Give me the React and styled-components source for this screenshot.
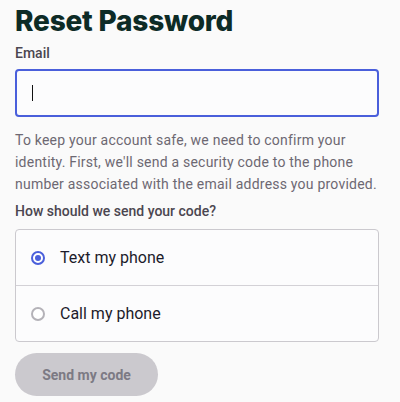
import styled, { createGlobalStyle } from 'styled-components';

const GlobalStyle = createGlobalStyle`
  body {
    margin: 0;
    background: #fafafa;
    font-family: Roboto, "Liberation Sans", sans-serif;
  }
`;

const Page = styled.div`
  padding: 0 21px 0 15px;
  display: flex;
  flex-direction: column;
`;

const Title = styled.h1`
  margin: 0;
  font-family: Inter, "Open Sans", sans-serif;
  font-weight: 800;
  font-size: 28px;
  line-height: 43px;
  color: #0d2b26;
  letter-spacing: -0.2px;
`;

const Label = styled.div`
  margin-top: ${props => props.top || 0}px;
  font-size: 14px;
  font-weight: 500;
  line-height: 20px;
  color: #4b4650;
`;

const Input = styled.div`
  margin-top: 6px;
  height: 44px;
  border: 2px solid #4a5fdb;
  border-radius: 4px;
  background: #fcfcfd;
  display: flex;
  align-items: center;
  padding-left: 15px;
`;

const Caret = styled.span`
  width: 1px;
  height: 16px;
  background: #111;
`;

const Note = styled.p`
  margin: 12px 0 0;
  font-size: 14px;
  line-height: 22px;
  letter-spacing: 0.22px;
  color: #6d6872;
`;

const Options = styled.div`
  margin-top: 8px;
  border: 1px solid #cbc9ce;
  border-radius: 4px;
  background: #fcfcfd;
`;

const Option = styled.label`
  height: 55px;
  display: flex;
  align-items: center;
  gap: 15px;
  padding-left: 15px;
  font-size: 16px;
  color: #1c1b2b;
  border-top: ${props => (props.first ? 'none' : '1px solid #d3d1d6')};
`;

const Radio = styled.span`
  box-sizing: border-box;
  width: 14px;
  height: 14px;
  border-radius: 50%;
  border: 2px solid ${props => (props.checked ? '#4a5fdb' : '#b4b2b8')};
  background: #fff;
  display: flex;
  align-items: center;
  justify-content: center;

  &::after {
    content: '';
    width: 6px;
    height: 6px;
    border-radius: 50%;
    background: ${props => (props.checked ? '#4a5fdb' : 'transparent')};
  }
`;

const Button = styled.button`
  margin-top: 11px;
  align-self: flex-start;
  width: 143px;
  height: 43px;
  border: none;
  border-radius: 22px;
  background: #cbc9ce;
  color: #7c7a84;
  font-family: Roboto, sans-serif;
  font-size: 14px;
  font-weight: 700;
`;

export default function App() {
  return (
    <>
      <GlobalStyle />
      <Page>
        <Title>Reset Password</Title>
        <Label>Email</Label>
        <Input>
          <Caret />
        </Input>
        <Note>
          To keep your account safe, we need to confirm your identity. First,
          we'll send a security code to the phone number associated with the
          email address you provided.
        </Note>
        <Label top={6}>How should we send your code?</Label>
        <Options>
          <Option first>
            <Radio checked />
            Text my phone
          </Option>
          <Option>
            <Radio />
            Call my phone
          </Option>
        </Options>
        <Button>Send my code</Button>
      </Page>
    </>
  );
}
